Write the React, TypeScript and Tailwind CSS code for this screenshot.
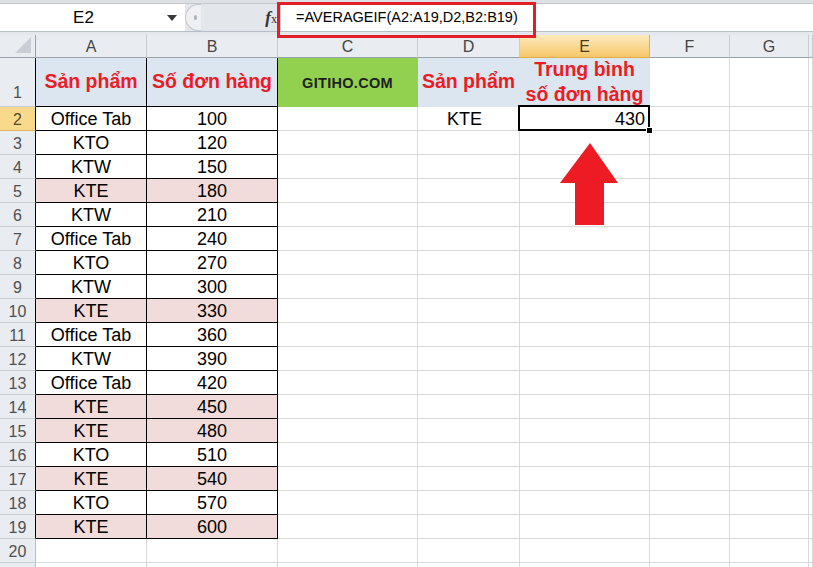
import React from "react";

const data: [string, number][] = [
  ["Office Tab", 100],
  ["KTO", 120],
  ["KTW", 150],
  ["KTE", 180],
  ["KTW", 210],
  ["Office Tab", 240],
  ["KTO", 270],
  ["KTW", 300],
  ["KTE", 330],
  ["Office Tab", 360],
  ["KTW", 390],
  ["Office Tab", 420],
  ["KTE", 450],
  ["KTE", 480],
  ["KTO", 510],
  ["KTE", 540],
  ["KTO", 570],
  ["KTE", 600],
];

const cols = ["A", "B", "C", "D", "E", "F", "G", ""];

const grid = "border-r border-b border-[#d9d9d9]";

function RowHeader({ n, active, black, tall }: { n?: number; active?: boolean; black?: boolean; tall?: boolean }) {
  return (
    <div
      className={`flex justify-center text-[16px] leading-none ${tall ? "items-end pb-[5px]" : "items-center pt-[2px]"} ${
        active
          ? "bg-[#f9d98b] text-[#5a4a2a] border-b border-[#e2b55c]"
          : "bg-[#e9ecf0] text-[#505050] border-b border-[#c8cdd3]"
      } border-r ${black ? "border-r-black" : "border-r-[#b8bec6]"}`}
    >
      {n}
    </div>
  );
}

export default function App() {
  return (
    <div className="relative w-[813px] h-[567px] overflow-hidden bg-white font-['Liberation_Sans',Arial,sans-serif]">
      {/* top strip */}
      <div className="h-[4px] bg-[#dde1e6] border-b border-[#c3c8cf]" />
      {/* formula bar */}
      <div className="flex h-[27px] bg-white">
        <div className="relative w-[185px] flex items-center justify-center pr-[28px]">
          <span className="text-[17px] text-black ml-[10px]">E2</span>
          <svg className="absolute left-[167px] top-[11px]" width="10" height="6" viewBox="0 0 10 6">
            <polygon points="0,0 10,0 5,6" fill="#3a3a3a" />
          </svg>
        </div>
        <div className="relative w-[95px] bg-[#e3e6ea] flex items-center">
          <div className="h-[27px] w-[16px] rounded-l-full bg-[#eef0f3] border-l border-t border-b border-[#c4c9cf] flex items-center justify-center">
            <div className="w-[3px] h-[5px] bg-[#b0b5bc] rounded-sm ml-[4px]" />
          </div>
          <div className="flex-1" />
          <span className="mr-[3px] font-['Liberation_Serif',serif] italic font-bold text-[17px] text-[#333] leading-none">
            f<span className="text-[12px] not-italic font-normal">x</span>
          </span>
        </div>
        <div className="flex-1 flex items-center pl-[15px] border-l border-[#c4c9cf]">
          <span className="text-[14.5px] text-black">=AVERAGEIF(A2:A19,D2,B2:B19)</span>
        </div>
      </div>
      <div className="h-[4px] bg-[#e4e7eb] border-t border-[#b8bec6]" />

      {/* sheet */}
      <div className="grid grid-cols-[36px_111px_131px_140px_102px_130px_80px_79px_1fr] grid-rows-[23px_49px_repeat(20,24px)]">
        {/* corner */}
        <div className="relative bg-[#e9ecf0] border-r border-b border-[#9aa3ad]">
          <svg className="absolute right-[4px] bottom-[4px]" width="16" height="16" viewBox="0 0 16 16">
            <polygon points="16,0 16,16 0,16" fill="#c9ced4" />
          </svg>
        </div>
        {cols.map((c, i) =>
          c === "E" ? (
            <div
              key={i}
              className="flex items-center justify-center pt-[2px] text-[16px] text-[#4a3a1a] bg-gradient-to-b from-[#fdebbd] to-[#f6c767] border-r border-b border-[#e2ac4a]"
            >
              {c}
            </div>
          ) : (
            <div
              key={i}
              className="flex items-center justify-center pt-[2px] text-[16px] text-[#454545] bg-[#e9ecf0] border-r border-b border-[#c8cdd3] border-b-[#9aa3ad]"
            >
              {c}
            </div>
          )
        )}

        {/* row 1 */}
        <RowHeader n={1} black tall />
        <div className="flex items-center justify-center bg-[#dce6f1] border-r border-b border-black text-[19.5px] font-bold text-[#ec1c24]">
          Sản phẩm
        </div>
        <div className="flex items-center justify-center bg-[#dce6f1] border-r border-b border-black text-[19.5px] font-bold text-[#ec1c24]">
          Số đơn hàng
        </div>
        <div className="flex items-center justify-center pt-[3px] bg-[#92d050] border-r border-b border-[#92d050] text-[14.5px] font-bold text-[#1e1e1e] tracking-[0.3px]">
          GITIHO.COM
        </div>
        <div className="flex items-center justify-center bg-[#dce6f1] border-r border-b border-[#dce6f1] text-[19.5px] font-bold text-[#ec1c24]">
          Sản phẩm
        </div>
        <div className="flex items-center justify-center bg-[#dce6f1] border-r border-b border-[#dce6f1] text-[19.5px] font-bold text-[#ec1c24] text-center leading-[25px]">
          Trung bình
          <br />
          số đơn hàng
        </div>
        <div className={grid} />
        <div className={grid} />
        <div className={grid} />

        {/* rows 2..19 */}
        {data.map(([name, val], idx) => {
          const r = idx + 2;
          const pink = name === "KTE";
          const bg = pink ? "bg-[#f2dcdb]" : "bg-white";
          return (
            <React.Fragment key={r}>
              <RowHeader n={r} black active={r === 2} />
              <div className={`flex items-center justify-center pt-[2px] ${bg} border-r border-b border-black text-[18px] text-black`}>
                {name}
              </div>
              <div className={`flex items-center justify-center pt-[2px] ${bg} border-r border-b border-black text-[18px] text-black`}>
                {val}
              </div>
              <div className={grid} />
              <div className={`${grid} flex items-center justify-center pt-[2px] pr-[8px] text-[18px] text-black`}>
                {r === 2 ? "KTE" : ""}
              </div>
              {r === 2 ? (
                <div className={`${grid} relative flex items-center justify-end pr-[4px] pt-[2px] text-[18px] text-black`}>
                  430
                  <div className="absolute left-[-2px] top-[-2px] right-[-1px] bottom-[-1px] border-[2.5px] border-black pointer-events-none" />
                  <div className="absolute right-[-4px] bottom-[-4px] w-[7px] h-[7px] bg-black border border-white" />
                </div>
              ) : (
                <div className={grid} />
              )}
              <div className={grid} />
              <div className={grid} />
              <div className={grid} />
            </React.Fragment>
          );
        })}

        {/* rows 20, 21 */}
        <RowHeader n={20} />
        {cols.map((_, i) => (
          <div key={`r20-${i}`} className={grid} />
        ))}
        <RowHeader />
        {cols.map((_, i) => (
          <div key={`r21-${i}`} className={grid} />
        ))}
      </div>

      {/* red annotation box around formula */}
      <div className="absolute left-[277px] top-[2px] w-[259px] h-[36px] border-[3px] border-[#e31e26] pointer-events-none" />

      {/* red arrow */}
      <svg className="absolute left-[560px] top-[143px]" width="58" height="82" viewBox="0 0 58 82">
        <polygon points="30,0 58,40 44,40 44,82 15,82 15,40 0,40" fill="#ed1c24" />
      </svg>
    </div>
  );
}
